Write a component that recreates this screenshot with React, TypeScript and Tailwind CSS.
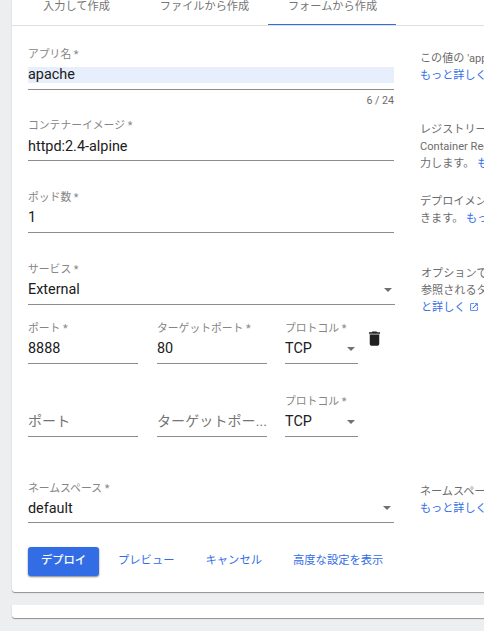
import type { ReactNode } from 'react';

type FieldProps = {
  label?: string;
  value?: string;
  placeholder?: string;
  select?: boolean;
  highlighted?: boolean;
  arrowInset?: string;
  labelPadding?: string;
  valueMargin?: string;
  className?: string;
};

function Field({
  label,
  value,
  placeholder,
  select,
  highlighted,
  arrowInset = 'pr-[3px]',
  labelPadding = 'pt-px',
  valueMargin = 'mt-[2px]',
  className = 'w-[366px]',
}: FieldProps) {
  return (
    <div className={`h-[44px] shrink-0 border-b border-[#8d8d8d] ${className}`}>
      <div className={`h-[15px] whitespace-nowrap text-[10.8px] leading-[15px] text-[#858585] ${labelPadding}`}>{label}</div>
      <div
        className={`mt-[3px] flex h-[20px] items-center justify-between ${arrowInset} ${highlighted ? 'relative' : ''}`}
      >
        {highlighted && <div className="absolute inset-x-0 top-[3px] h-[16px] bg-[#e8effc]" />}
        {value && (
          <span className={`relative whitespace-nowrap text-[14.4px] leading-[20px] text-[#202020] ${valueMargin}`}>
            {value}
          </span>
        )}
        {placeholder && (
          <span className="whitespace-nowrap text-[14px] leading-[20px] tracking-[0.1px] text-[#757575]">{placeholder}</span>
        )}
        {select && (
          <svg className="mt-[2px] shrink-0" width="8" height="4" viewBox="0 0 8 4">
            <path d="M0 0h8L4 4z" fill="#707070" />
          </svg>
        )}
      </div>
    </div>
  );
}

function Row({ children, help, className }: { children: ReactNode; help?: ReactNode; className: string }) {
  return (
    <div className={`flex ${className}`}>
      <div className="flex w-[392px] shrink-0">{children}</div>
      <div className="shrink-0 whitespace-nowrap pt-[4px] text-[11.1px] leading-[17px] text-[#6c6c6c]">{help}</div>
    </div>
  );
}

function Link({ children }: { children: ReactNode }) {
  return <span className="text-[#326de6]">{children}</span>;
}

export default function App() {
  return (
    <div
      className="h-[631px] w-[484px] overflow-hidden bg-[#edeef0] pl-[12px] font-['Roboto','Noto_Sans_CJK_JP',sans-serif]"
      lang="ja"
    >
      <div className="h-[592px] w-[500px] rounded-bl-[3px] bg-white shadow-[0_1px_1px_#8f9091]">
        <div className="flex h-[26px] border-b border-[#e0e0e0] text-[11.2px] leading-[14px] text-[#757575]">
          <div className="w-[128px] pl-px text-center">入力して作成</div>
          <div className="w-[128px] pl-px text-center">ファイルから作成</div>
          <div className="h-[25px] w-[128px] border-b border-[#326de6] pl-px text-center">フォームから作成</div>
        </div>

        <div className="pl-[16px] pt-[20px]">
          <Row
            className="h-[71px]"
            help={
              <>
                この値の 'app'
                <br />
                <Link>もっと詳しく</Link>
              </>
            }
          >
            <div>
              <Field label="アプリ名 *" value="apache" highlighted />
              <div className="mt-[4px] text-right text-[10.6px] leading-[13px] text-[#6c6c6c]">6 / 24</div>
            </div>
          </Row>
          <Row
            className="h-[72px]"
            help={
              <>
                レジストリー
                <br />
                Container Reg
                <br />
                力します。 <Link>もっ</Link>
              </>
            }
          >
            <Field label="コンテナーイメージ *" value="httpd:2.4-alpine" valueMargin="mt-[4px]" />
          </Row>
          <Row
            className="h-[72px]"
            help={
              <>
                デプロイメント
                <br />
                きます。 <Link>もっと</Link>
              </>
            }
          >
            <Field label="ポッド数 *" value="1" />
          </Row>
          <Row
            className="h-[59px]"
            help={
              <div className="pl-px">
                オプションで
                <br />
                参照されるタ
                <br />
                <Link>
                  と詳しく
                  <svg className="ml-[4px] inline-block align-[-1px]" width="10" height="10" viewBox="0 0 24 24" fill="#326de6">
                    <path d="M19 19H5V5h7V3H5a2 2 0 0 0-2 2v14a2 2 0 0 0 2 2h14c1.1 0 2-.9 2-2v-7h-2v7zM14 3v2h3.59l-9.83 9.83 1.41 1.41L19 6.41V10h2V3h-7z" />
                  </svg>
                </Link>
              </div>
            }
          >
            <Field label="サービス *" value="External" select className="w-[367px]" />
          </Row>
          <Row className="h-[73px]">
            <Field label="ポート *" value="8888" className="w-[110px]" />
            <Field label="ターゲットポート *" value="80" className="ml-[19px] w-[110px]" />
            <Field label="プロトコル *" value="TCP" select className="ml-[18px] w-[73px]" />
            <svg className="ml-[7px] mt-[9px]" width="19" height="19" viewBox="0 0 24 24" fill="#202020">
              <path d="M6 19c0 1.1.9 2 2 2h8c1.1 0 2-.9 2-2V7H6v12z" />
              <path d="M19 4h-3.5l-1-1h-5l-1 1H5v2h14V4z" />
              <path d="M6 6h12v1.2H6z" fill="#777777" />
            </svg>
          </Row>
          <Row className="h-[86px]">
            <Field placeholder="ポート" className="w-[110px]" arrowInset="pr-0" />
            <Field placeholder="ターゲットポー..." className="ml-[19px] w-[110px]" arrowInset="pr-0" />
            <Field label="プロトコル *" value="TCP" select className="ml-[18px] w-[73px]" />
          </Row>
          <Row
            className="h-[68px]"
            help={
              <>
                ネームスペース
                <br />
                <Link>もっと詳しく</Link>
              </>
            }
          >
            <Field
              label="ネームスペース *"
              value="default"
              select
              labelPadding="pt-[2px]"
              valueMargin="mt-[4px]"
            />
          </Row>

          <div className="flex text-[11.3px] font-medium leading-[25px] text-[#326de6]">
            <button className="h-[29px] w-[71px] rounded-[3px] bg-[#326de6] pb-[2px] text-white shadow-[0_1px_2px_#00000080]">
              デプロイ
            </button>
            <button className="ml-[19px] h-[29px] pb-[2px] font-normal">プレビュー</button>
            <button className="ml-[31px] h-[29px] pb-[2px] font-normal">キャンセル</button>
            <button className="ml-[31px] h-[29px] pb-[2px] font-normal">高度な設定を表示</button>
          </div>
        </div>
      </div>

      <div className="mt-[13px] h-[13px] w-[500px] rounded-bl-[3px] bg-white shadow-[0_1px_1px_#8f9091]" />
    </div>
  );
}
